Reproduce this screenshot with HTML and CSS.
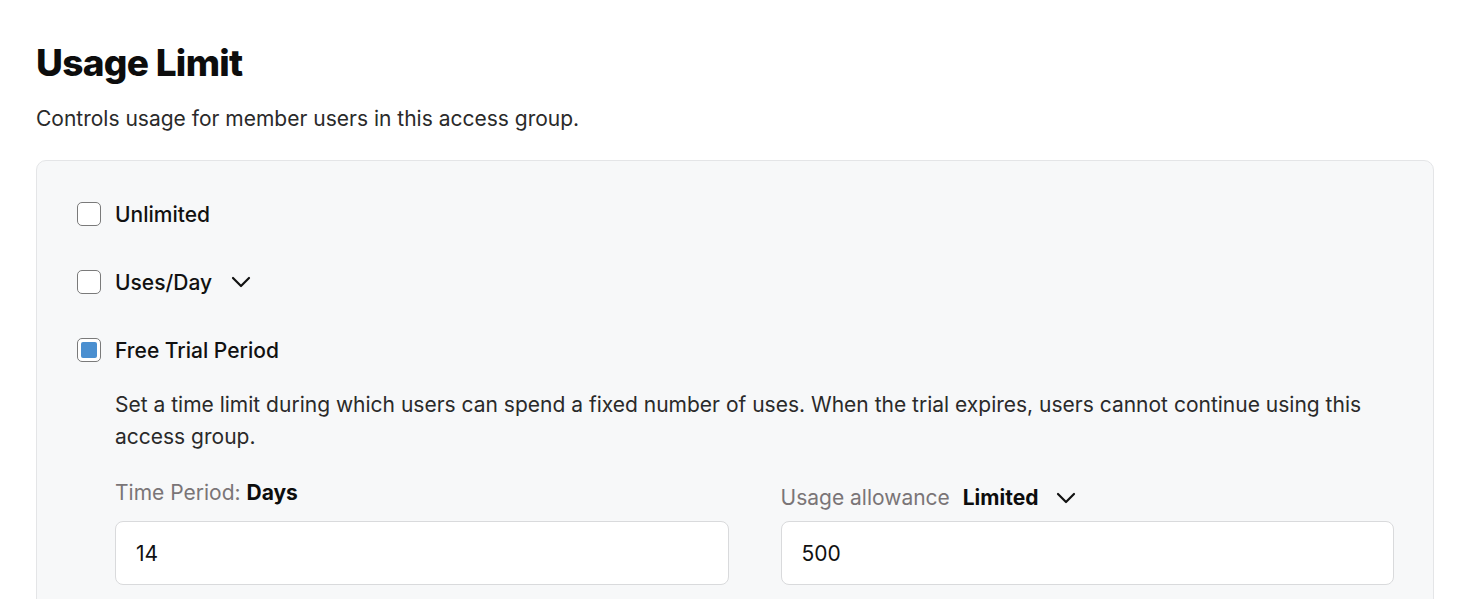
FILE: index.html
```html
<!DOCTYPE html>
<html lang="en">
<head>
<meta charset="utf-8">
<title>Usage Limit</title>
<link rel="stylesheet" href="styles.css">
</head>
<body>
<main class="page">
  <h1 class="title">Usage Limit</h1>
  <p class="subtitle">Controls usage for member users in this access group.</p>
  <section class="card">
    <label class="option">
      <span class="box"></span>
      <span class="option-label">Unlimited</span>
    </label>
    <label class="option">
      <span class="box"></span>
      <span class="option-label">Uses/Day</span>
      <svg class="chev" width="20" height="12" viewBox="0 0 20 12" aria-hidden="true"><path d="M2 2 L10 10 L18 2" fill="none" stroke="#111" stroke-width="2.2" stroke-linecap="round" stroke-linejoin="round"/></svg>
    </label>
    <label class="option">
      <span class="box checked"><span class="fill"></span></span>
      <span class="option-label">Free Trial Period</span>
    </label>
    <div class="details">
      <p class="desc">Set a time limit during which users can spend a fixed number of uses. When the trial expires, users cannot continue using this access group.</p>
      <div class="fields">
        <div class="field">
          <div class="field-label">Time Period: <strong>Days</strong></div>
          <div class="input">14</div>
        </div>
        <div class="field">
          <div class="field-label alt">Usage allowance <strong class="sel">Limited</strong>
            <svg class="chev small" width="20" height="12" viewBox="0 0 20 12" aria-hidden="true"><path d="M2 2 L10 10 L18 2" fill="none" stroke="#111" stroke-width="2.2" stroke-linecap="round" stroke-linejoin="round"/></svg>
          </div>
          <div class="input">500</div>
        </div>
      </div>
    </div>
  </section>
</main>
</body>
</html>
```
FILE: styles.css
```css
* { box-sizing: border-box; }
html, body { margin: 0; padding: 0; background: #ffffff; }
body {
  font-family: Inter, "Liberation Sans", sans-serif;
  color: #1a1a1a;
}
.page {
  padding: 40px 30px 0 36px;
}
.title {
  margin: 0;
  font-size: 37px;
  line-height: 46px;
  font-weight: 800;
  letter-spacing: -0.7px;
  color: #0d0d0d;
}
.subtitle {
  margin: 19px 0 0;
  font-size: 21px;
  line-height: 28px;
  color: #2a2a2a;
}
.card {
  margin-top: 27px;
  background: #f7f8f9;
  border: 1px solid #e4e5e7;
  border-radius: 10px;
  padding: 41px 39px 40px 40px;
  width: 1398px;
}
.option {
  display: flex;
  align-items: center;
  height: 24px;
  margin-bottom: 44px;
}
.box {
  width: 24px;
  height: 24px;
  border: 1.5px solid #7a7a7a;
  border-radius: 5px;
  background: #ffffff;
  display: flex;
  align-items: center;
  justify-content: center;
  flex: none;
}
.box .fill {
  width: 16px;
  height: 16px;
  background: #4a8fd0;
  border-radius: 2px;
}
.option-label {
  margin-left: 14px;
  font-size: 21px;
  font-weight: 500;
  color: #111;
}
.chev { margin-left: 19px; }
.details {
  margin-top: -17px;
  padding-left: 38px;
}
.desc {
  margin: 0;
  font-size: 21px;
  line-height: 32px;
  color: #2a2a2a;
}
.fields {
  display: grid;
  grid-template-columns: 1fr 1fr;
  column-gap: 52px;
  margin-top: 27px;
}
.field-label {
  height: 30px;
  display: flex;
  align-items: flex-start;
  font-size: 21px;
  color: #7a7577;
  white-space: pre;
}
.field-label strong { color: #0d0d0d; font-weight: 700; }
.field-label.alt { padding-top: 5px; align-items: center; height: 30px; }
.field-label .sel { margin-left: 7px; }
.field-label .chev.small { margin-left: 18px; }
.input {
  margin-top: 11px;
  height: 64px;
  background: #ffffff;
  border: 1px solid #d9dadc;
  border-radius: 8px;
  display: flex;
  align-items: center;
  padding-left: 20px;
  font-size: 21px;
  color: #111;
}
```
